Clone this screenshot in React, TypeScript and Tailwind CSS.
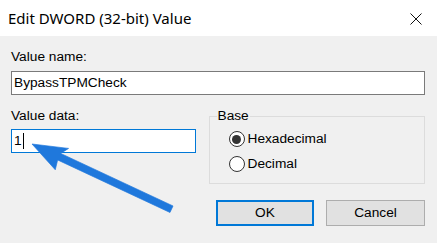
import { useState } from 'react';

const BODY_FONT = "font-['Liberation_Sans',Arial,sans-serif]";

function Radio({ label, checked, onSelect }: { label: string; checked: boolean; onSelect: () => void }) {
  return (
    <button type="button" onClick={onSelect} className="flex h-[16px] items-center gap-[3px] text-left">
      <span className="flex h-[16px] w-[16px] items-center justify-center rounded-full border border-[#333333] bg-white">
        {checked && <span className="h-[9px] w-[9px] rounded-full bg-[#333333]" />}
      </span>
      <span className="leading-[16px]">{label}</span>
    </button>
  );
}

function BlueArrow() {
  // tip sits on the input's bottom edge, shaft runs down-right
  return (
    <svg className="pointer-events-none absolute inset-0" width={437} height={243} viewBox="0 0 437 243">
      <g transform="translate(32 144) rotate(25.06)">
        <polygon
          points="0,0 35,-11.5 30,-3.6 154,-3.6 154,3.6 30,3.6 32,13.5"
          fill="#1f78dc"
          stroke="#1f78dc"
          strokeWidth="0.6"
          strokeLinejoin="round"
        />
      </g>
    </svg>
  );
}

export default function App() {
  const [base, setBase] = useState<'hex' | 'dec'>('hex');

  return (
    <div className={`relative h-[243px] w-[437px] overflow-hidden bg-[#f0f0f0] text-[13.7px] text-black ${BODY_FONT}`}>
      <div className="flex h-[36px] items-center justify-between bg-white pl-[8px] pr-[15px]">
        <span className="font-['Noto_Sans',sans-serif] text-[15px] leading-[20px]">Edit DWORD (32-bit) Value</span>
        <svg width="12" height="12" viewBox="0 0 12 12" className="mt-[1px]">
          <path d="M0.5 0.5 L11.5 11.5 M11.5 0.5 L0.5 11.5" stroke="#111" strokeWidth="1" fill="none" />
        </svg>
      </div>

      <div className="flex flex-col pl-[11px] pr-[12px] pt-[13px]">
        <div className="leading-[16px]">Value name:</div>
        <div className="mt-[6px] flex h-[24px] items-center border border-[#7a7a7a] bg-white px-[2px] leading-[16px]">
          BypassTPMCheck
        </div>

        <div className="mt-[13px] flex gap-[13px]">
          <div className="flex w-[185px] flex-col">
            <div className="leading-[16px]">Value data:</div>
            <div className="mt-[5px] flex h-[24px] items-center border border-[#0078d7] bg-white px-[2px] leading-[16px]">
              <span>1</span>
              <span className="ml-[1px] h-[16px] w-px bg-black" />
            </div>
          </div>

          <fieldset className="h-[76px] w-[217px] border border-[#dcdcdc] pl-[7px]">
            <legend className="px-[1px] leading-[16px]">Base</legend>
            <div className="mt-[7px] flex flex-col gap-[9px] pl-[12px]">
              <Radio label="Hexadecimal" checked={base === 'hex'} onSelect={() => setBase('hex')} />
              <Radio label="Decimal" checked={base === 'dec'} onSelect={() => setBase('dec')} />
            </div>
          </fieldset>
        </div>

        <div className="mt-[16px] flex justify-end gap-[12px]">
          <button className="h-[26px] w-[98px] border-2 border-[#0078d7] bg-[#e1e1e1] leading-[16px]">OK</button>
          <button className="h-[26px] w-[99px] border border-[#adadad] bg-[#e1e1e1] leading-[16px]">Cancel</button>
        </div>
      </div>

      <BlueArrow />
    </div>
  );
}
